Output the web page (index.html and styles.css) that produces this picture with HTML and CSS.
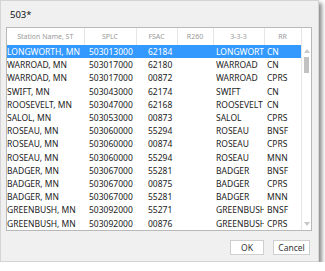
FILE: index.html
```html
<!DOCTYPE html>
<html lang="en">

<head>
    <meta charset="UTF-8">
    <link rel="stylesheet" href="styles.css">
</head>

<body>
    <div class="dialog">
        <div class="dialog-title">503*</div>

        <!-- Station list with header and scrollbar -->
        <div class="list-box">
            <div class="list-main">
                <table class="station-table">
                    <colgroup>
                        <col class="col-name">
                        <col class="col-splc">
                        <col class="col-fsac">
                        <col class="col-r260">
                        <col class="col-333">
                        <col class="col-rr">
                    </colgroup>
                    <thead>
                        <tr>
                            <th>Station Name, ST</th>
                            <th>SPLC</th>
                            <th>FSAC</th>
                            <th>R260</th>
                            <th>3-3-3</th>
                            <th>RR</th>
                        </tr>
                    </thead>
                    <tbody>
                        <tr class="selected"><td>LONGWORTH, MN</td><td>503013000</td><td>62184</td><td></td><td>LONGWORTH</td><td>CN</td></tr>
                        <tr><td>WARROAD, MN</td><td>503017000</td><td>62180</td><td></td><td>WARROAD</td><td>CN</td></tr>
                        <tr><td>WARROAD, MN</td><td>503017000</td><td>00872</td><td></td><td>WARROAD</td><td>CPRS</td></tr>
                        <tr><td>SWIFT, MN</td><td>503043000</td><td>62174</td><td></td><td>SWIFT</td><td>CN</td></tr>
                        <tr><td>ROOSEVELT, MN</td><td>503047000</td><td>62168</td><td></td><td>ROOSEVELT</td><td>CN</td></tr>
                        <tr><td>SALOL, MN</td><td>503053000</td><td>00873</td><td></td><td>SALOL</td><td>CPRS</td></tr>
                        <tr><td>ROSEAU, MN</td><td>503060000</td><td>55294</td><td></td><td>ROSEAU</td><td>BNSF</td></tr>
                        <tr><td>ROSEAU, MN</td><td>503060000</td><td>00874</td><td></td><td>ROSEAU</td><td>CPRS</td></tr>
                        <tr><td>ROSEAU, MN</td><td>503060000</td><td>55294</td><td></td><td>ROSEAU</td><td>MNN</td></tr>
                        <tr><td>BADGER, MN</td><td>503067000</td><td>55281</td><td></td><td>BADGER</td><td>BNSF</td></tr>
                        <tr><td>BADGER, MN</td><td>503067000</td><td>00875</td><td></td><td>BADGER</td><td>CPRS</td></tr>
                        <tr><td>BADGER, MN</td><td>503067000</td><td>55281</td><td></td><td>BADGER</td><td>MNN</td></tr>
                        <tr><td>GREENBUSH, MN</td><td>503092000</td><td>55271</td><td></td><td>GREENBUSH</td><td>BNSF</td></tr>
                        <tr><td>GREENBUSH, MN</td><td>503092000</td><td>00876</td><td></td><td>GREENBUSH</td><td>CPRS</td></tr>
                    </tbody>
                </table>
            </div>

            <!-- Vertical scrollbar -->
            <div class="scroll-col">
                <div class="scroll-head"></div>
                <div class="scrollbar">
                    <span class="arrow arrow-up"></span>
                    <div class="scroll-track">
                        <div class="scroll-thumb"></div>
                    </div>
                    <span class="arrow arrow-down"></span>
                </div>
            </div>
        </div>

        <div class="dialog-buttons">
            <button class="btn btn-ok">OK</button>
            <button class="btn btn-cancel">Cancel</button>
        </div>
    </div>
</body>

</html>
```

FILE: styles.css
```css
body {
    margin: 0;
    background-color: #fff;
    font-family: 'Noto Sans', 'Open Sans', sans-serif;
    color: #222;
}

.dialog {
    width: 319px;
    height: 262px;
    box-sizing: border-box;
    background-color: #f0f0f0;
    border: 1px solid #d4d4d4;
    box-shadow: 3px 3px 4px rgba(0, 0, 0, 0.45);
    padding: 0 6px 0 5px;
    display: flex;
    flex-direction: column;
}

.dialog-title {
    font-size: 9.5px;
    height: 26px;
    line-height: 28px;
    padding-left: 4px;
    color: #111;
}

.list-box {
    display: flex;
    height: 204px;
    box-sizing: border-box;
    background-color: #fff;
    border: 1px solid #b9b9b9;
}

.list-main {
    width: 294px;
    overflow: hidden;
}

.station-table {
    width: 294px;
    table-layout: fixed;
    border-collapse: collapse;
}

.col-name { width: 77px; }
.col-splc { width: 52px; }
.col-fsac { width: 41px; }
.col-r260 { width: 36px; }
.col-333 { width: 51px; }
.col-rr { width: 37px; }

.station-table th {
    height: 17px;
    padding: 0;
    font-size: 7px;
    font-weight: normal;
    color: #9a9a9a;
    text-align: center;
    border-right: 1px solid #e6e6e6;
}

.station-table td {
    height: 13.2px;
    padding: 0;
    font-size: 8.5px;
    line-height: 13px;
    white-space: nowrap;
    overflow: hidden;
    text-overflow: clip;
}

.station-table td:nth-child(2) { padding-left: 5px; }
.station-table td:nth-child(3) { padding-left: 12px; }
.station-table td:nth-child(5) { padding-left: 3px; }
.station-table td:nth-child(6) { padding-left: 3px; }

.station-table tr.selected td {
    background-color: #3399ff;
    color: #fff;
}

.scroll-col {
    flex: 1;
    display: flex;
    flex-direction: column;
    border-left: 1px solid #e6e6e6;
}

.scroll-head {
    height: 17px;
    flex-shrink: 0;
}

.scrollbar {
    flex: 1;
    display: flex;
    flex-direction: column;
    align-items: center;
    padding: 4px 0;
}

.arrow {
    width: 0;
    height: 0;
    border-left: 3px solid transparent;
    border-right: 3px solid transparent;
}

.arrow-up {
    border-bottom: 4px solid #c8c8c8;
}

.arrow-down {
    border-top: 4px solid #c8c8c8;
}

.scroll-track {
    flex: 1;
    width: 5px;
    padding-top: 4px;
}

.scroll-thumb {
    height: 16px;
    background-color: #c2c2c2;
}

.dialog-buttons {
    display: flex;
    justify-content: flex-end;
    gap: 9px;
    padding: 9px 2px 0 0;
}

.btn {
    height: 15px;
    padding: 0;
    font-family: 'Noto Sans', 'Open Sans', sans-serif;
    font-size: 8.5px;
    color: #333;
    background-color: #fff;
    border: 1px solid #cfcfcf;
    border-radius: 0;
}

.btn-ok { width: 34px; }
.btn-cancel { width: 37px; }
```
